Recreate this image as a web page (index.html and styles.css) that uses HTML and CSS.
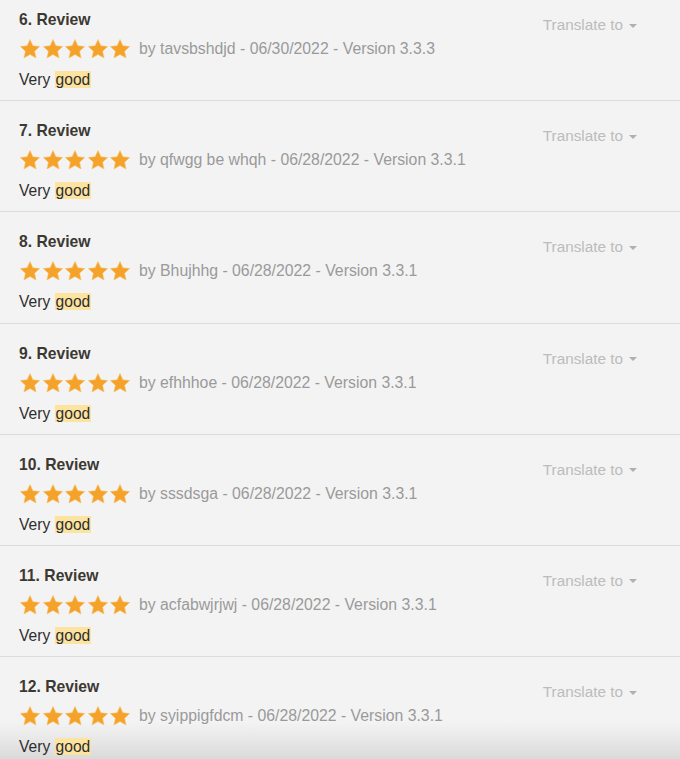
FILE: index.html
```html
<!DOCTYPE html>
<html>
<head>
<meta charset="utf-8">
<link rel="stylesheet" href="styles.css">
</head>
<body>
<svg width="0" height="0" class="defs">
  <defs>
    <symbol id="star" viewBox="0 0 24 24">
      <path d="M12 1.6l3.1 6.9 7.5.8-5.6 5.1 1.6 7.4L12 18l-6.6 3.8 1.6-7.4-5.6-5.1 7.5-.8z"/>
    </symbol>
  </defs>
</svg>
<div class="list">
  <div class="review">
    <div class="head"><div class="title">6. Review</div><div class="translate">Translate to <span class="caret"></span></div></div>
    <div class="meta"><span class="stars"><svg><use href="#star"/></svg><svg><use href="#star"/></svg><svg><use href="#star"/></svg><svg><use href="#star"/></svg><svg><use href="#star"/></svg></span><span class="by">by tavsbshdjd - 06/30/2022 - Version 3.3.3</span></div>
    <div class="body">Very <mark>good</mark></div>
  </div>
  <div class="review">
    <div class="head"><div class="title">7. Review</div><div class="translate">Translate to <span class="caret"></span></div></div>
    <div class="meta"><span class="stars"><svg><use href="#star"/></svg><svg><use href="#star"/></svg><svg><use href="#star"/></svg><svg><use href="#star"/></svg><svg><use href="#star"/></svg></span><span class="by">by qfwgg be whqh - 06/28/2022 - Version 3.3.1</span></div>
    <div class="body">Very <mark>good</mark></div>
  </div>
  <div class="review">
    <div class="head"><div class="title">8. Review</div><div class="translate">Translate to <span class="caret"></span></div></div>
    <div class="meta"><span class="stars"><svg><use href="#star"/></svg><svg><use href="#star"/></svg><svg><use href="#star"/></svg><svg><use href="#star"/></svg><svg><use href="#star"/></svg></span><span class="by">by Bhujhhg - 06/28/2022 - Version 3.3.1</span></div>
    <div class="body">Very <mark>good</mark></div>
  </div>
  <div class="review">
    <div class="head"><div class="title">9. Review</div><div class="translate">Translate to <span class="caret"></span></div></div>
    <div class="meta"><span class="stars"><svg><use href="#star"/></svg><svg><use href="#star"/></svg><svg><use href="#star"/></svg><svg><use href="#star"/></svg><svg><use href="#star"/></svg></span><span class="by">by efhhhoe - 06/28/2022 - Version 3.3.1</span></div>
    <div class="body">Very <mark>good</mark></div>
  </div>
  <div class="review">
    <div class="head"><div class="title">10. Review</div><div class="translate">Translate to <span class="caret"></span></div></div>
    <div class="meta"><span class="stars"><svg><use href="#star"/></svg><svg><use href="#star"/></svg><svg><use href="#star"/></svg><svg><use href="#star"/></svg><svg><use href="#star"/></svg></span><span class="by">by sssdsga - 06/28/2022 - Version 3.3.1</span></div>
    <div class="body">Very <mark>good</mark></div>
  </div>
  <div class="review">
    <div class="head"><div class="title">11. Review</div><div class="translate">Translate to <span class="caret"></span></div></div>
    <div class="meta"><span class="stars"><svg><use href="#star"/></svg><svg><use href="#star"/></svg><svg><use href="#star"/></svg><svg><use href="#star"/></svg><svg><use href="#star"/></svg></span><span class="by">by acfabwjrjwj - 06/28/2022 - Version 3.3.1</span></div>
    <div class="body">Very <mark>good</mark></div>
  </div>
  <div class="review">
    <div class="head"><div class="title">12. Review</div><div class="translate">Translate to <span class="caret"></span></div></div>
    <div class="meta"><span class="stars"><svg><use href="#star"/></svg><svg><use href="#star"/></svg><svg><use href="#star"/></svg><svg><use href="#star"/></svg><svg><use href="#star"/></svg></span><span class="by">by syippigfdcm - 06/28/2022 - Version 3.3.1</span></div>
    <div class="body">Very <mark>good</mark></div>
  </div>
</div>
</body>
</html>
```
FILE: styles.css
```css
html, body {
  margin: 0;
  padding: 0;
  overflow: hidden;
}
html {
  height: 759px;
  background: linear-gradient(to bottom, #f3f3f3 0, #f3f3f3 722px, #e6e6e6 742px, #dadada 759px);
}
body {
  font-family: "Liberation Sans", Arial, sans-serif;
  height: 759px;
}
.defs {
  position: absolute;
  width: 0;
  height: 0;
}
.list {
  margin-top: -10px;
}
.review {
  padding: 21px 43px 11.2px 19px;
  border-bottom: 1px solid #dcdcdc;
}
.head {
  display: flex;
  justify-content: space-between;
  align-items: flex-start;
  height: 18px;
}
.title {
  font-weight: bold;
  font-size: 15.7px;
  line-height: 18px;
  color: #3c3832;
}
.translate {
  margin-top: 5px;
  font-size: 15.3px;
  line-height: 18px;
  color: #bcbcbc;
  display: flex;
  align-items: center;
  gap: 6px;
}
.caret {
  width: 0;
  height: 0;
  border-left: 4px solid transparent;
  border-right: 4px solid transparent;
  border-top: 4px solid #b0b0b0;
  margin-top: 1px;
}
.meta {
  margin-top: 9px;
  height: 22px;
  display: flex;
  align-items: center;
  gap: 8px;
}
.stars {
  display: flex;
  gap: 0.5px;
}
.stars svg {
  width: 22px;
  height: 22px;
  fill: #f5a22a;
  stroke: #f7c067;
  stroke-width: 0.6;
}
.by {
  font-size: 15.8px;
  color: #9a9a9a;
  line-height: 18px;
}
.body {
  margin-top: 11px;
  font-size: 15.6px;
  line-height: 18px;
  color: #2e2e2e;
}
mark {
  background: #fde3a0;
  color: #2e2e2e;
  padding: 0 1px;
}
```
